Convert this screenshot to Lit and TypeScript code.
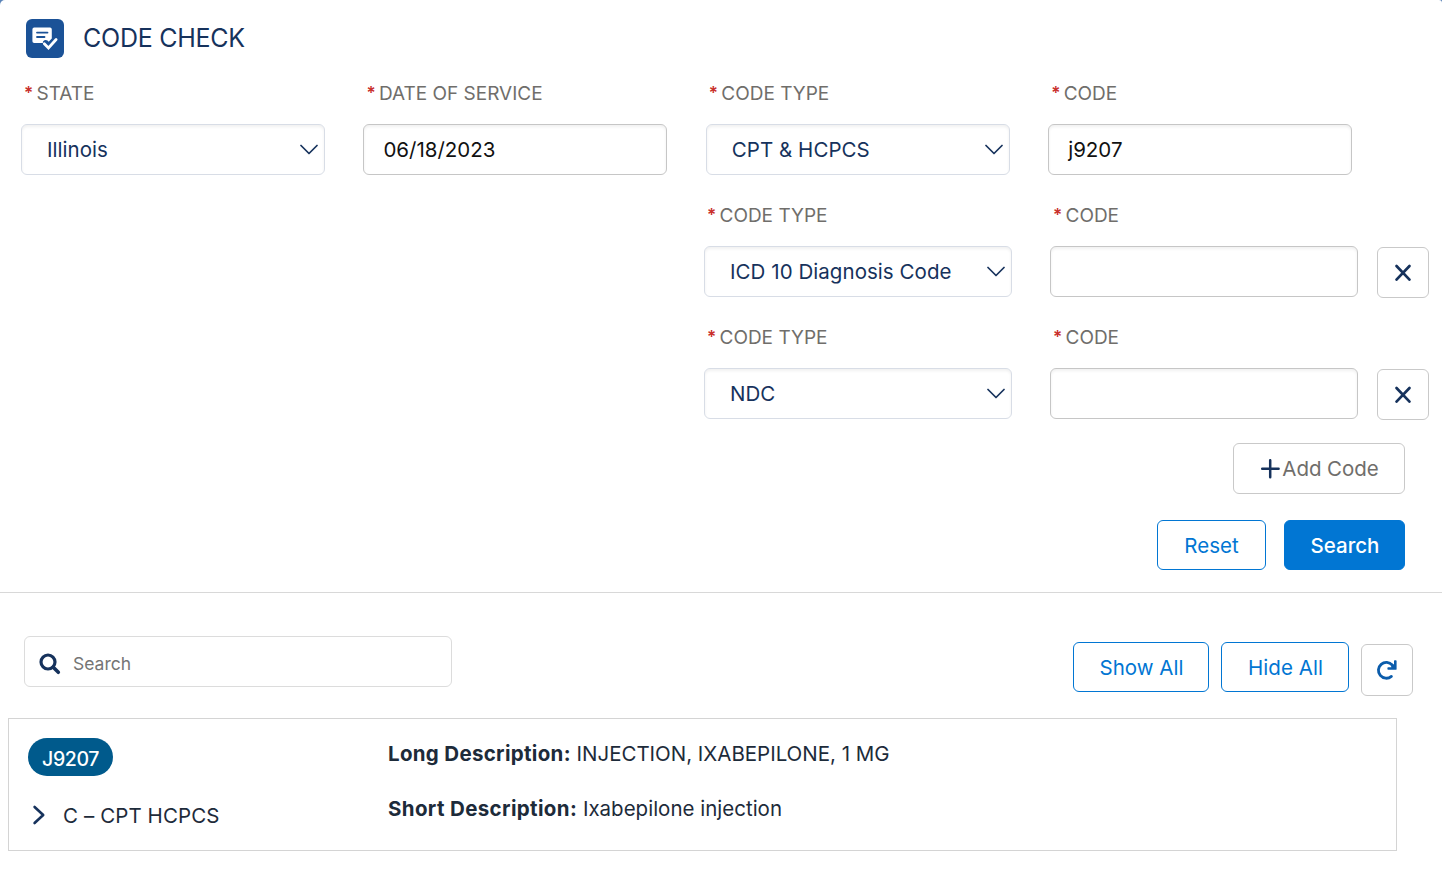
import { LitElement, html, css } from "lit";
import { customElement, state } from "lit/decorators.js";

interface CodeRow { type: string; code: string; }

@customElement("app-root")
export class AppRoot extends LitElement {
  static styles = css`
    :host {
      display: block;
      height: 878px;
      overflow: hidden;
      background: #5b84b8;
      font-family: Inter, "Liberation Sans", sans-serif;
      font-size: 20.5px;
      color: #1d2b3a;
    }
    * { box-sizing: border-box; }
    .page { height: 878px; background: #fff; border-radius: 5px 3px 0 0; display: flex; flex-direction: column; }
    header { display: flex; align-items: center; gap: 19px; height: 58px; padding: 19px 0 0 26px; }
    .logo { width: 38px; height: 39px; border-radius: 6px; background: #1b5297; display: block; }
    h1 { margin: 0; padding-bottom: 1px; font-size: 25px; font-weight: 400; color: #16325c; line-height: 38px; letter-spacing: -0.25px; }
    .form { height: 534px; flex: none; }
    .row { display: grid; height: 122px; align-items: start; }
    .first { grid-template-columns: repeat(4, 304px); column-gap: 38.4px; padding: 14px 0 0 21px; height: 124px; }
    .extra { grid-template-columns: 308px 308px 52px; column-gap: 38px; padding: 12px 0 0 704px; }
    .extra .remove { margin: 53px 0 0 -19px; }
    .label { display: flex; height: 40px; padding: 4px 0 0 3px; line-height: 36px; font-size: 19px; color: #706e6b; white-space: nowrap; }
    .req { color: #c9302c; width: 12.5px; font-size: 17px; font-weight: 600; line-height: 35px; }
    .control { height: 51px; margin-top: 12px; border: 1px solid #c6c6c6; border-radius: 6px; display: flex; align-items: center; justify-content: space-between; color: #111; padding-left: 19px; box-shadow: inset 0 2px 3px rgba(0, 0, 0, .06); white-space: nowrap; }
    .select { border-color: #d8dde6; color: #16325c; padding: 0 6px 0 25px; letter-spacing: 0.05px; }
    .chev { width: 18px; height: 12px; display: block; }
    button { font: inherit; display: flex; align-items: center; justify-content: center; background: #fff; border: 1px solid #0176d3; color: #0176d3; border-radius: 6px; padding: 0; height: 50px; white-space: nowrap; }
    .neutral { border-color: #c9c9c9; color: #706e6b; }
    .remove { width: 52px; height: 51px; }
    .actions { display: flex; justify-content: flex-end; padding-right: 37px; gap: 18px; }
    .adding { padding-top: 17px; padding-bottom: 26px; }
    .add { width: 172px; height: 51px; gap: 2px; padding-left: 1px; letter-spacing: -0.05px; }
    .reset { width: 109px; padding-top: 1px; }
    .primary { width: 121px; padding: 1px 0 0 1px; background: #0176d3; color: #fff; font-weight: 500; }
    .results { border-top: 1px solid #d8d8d8; flex: 1; padding-top: 43px; }
    .toolbar { display: flex; align-items: flex-start; padding: 0 29px 0 24px; height: 82px; }
    .search { width: 428px; height: 51px; border: 1px solid #dcdcdc; border-radius: 6px; display: flex; align-items: center; padding: 3px 0 0 14px; font-size: 17.5px; color: #757575; gap: 12px; }
    .search svg { margin-top: 1px; }
    .tools { margin-left: auto; display: flex; gap: 12px; padding-top: 6px; }
    .show { width: 136px; padding-left: 1px; }
    .hide { width: 128px; padding-left: 1px; letter-spacing: 0.05px; }
    .refresh { width: 52px; height: 52px; margin-top: 2px; }
    .card { margin: 0 45px 0 8px; height: 133px; border: 1px solid #d4d4d4; display: grid; grid-template-columns: 360px 1fr; padding: 19px 0 0 19px; }
    .pill { display: flex; width: 85px; height: 38px; border-radius: 19px; background: #005a8c; color: #fff; align-items: center; justify-content: center; padding-top: 3px; font-size: 19.5px; font-weight: 500; letter-spacing: -0.4px; }
    .group { display: flex; align-items: center; gap: 17px; margin-top: 27px; padding-left: 4px; letter-spacing: 0.1px; }
    .group svg { margin-top: -1px; }
    .desc { line-height: 32px; white-space: nowrap; }
    .desc:first-child { letter-spacing: -0.02px; }
    .desc + .desc { margin-top: 23px; }
    .desc b { font-weight: 700; letter-spacing: 0.36px; }
    .desc:first-child b { letter-spacing: 0.31px; }
    svg { flex: none; }
  `;

  @state() private rows: CodeRow[] = [
    { type: "ICD 10 Diagnosis Code", code: "" },
    { type: "NDC", code: "" },
  ];

  private label(text: string) {
    return html`<div class="label"><span class="req">*</span><span>${text}</span></div>`;
  }

  private select(label: string, value: string) {
    return html`<div>${this.label(label)}
      <div class="control select"><span>${value}</span>
        <svg class="chev" viewBox="0 0 18 12" fill="none" stroke="#16325c" stroke-width="1.7" stroke-linecap="round" stroke-linejoin="round"><path d="M1 1.500 9 9.500 17 1.500" /></svg>
      </div></div>`;
  }

  private input(label: string, value: string) {
    return html`<div>${this.label(label)}
      <div class="control"><span>${value}</span></div></div>`;
  }

  render() {
    return html`<div class="page">
      <header>
        <svg class="logo" viewBox="0 0 38 39">
          <path fill="#fff" d="M8.2 8.6H24a1.8 1.8 0 0 1 1.8 1.8v9.2l-3.1 3.2-1.2-1.2a2.9 2.9 0 0 0-4.7 2.4H8.2a1.8 1.8 0 0 1-1.8-1.8V10.400a1.8 1.8 0 0 1 1.8-1.8Z" />
          <path d="M11 13.600h10.500M11 18h7.500" stroke="#1b5297" stroke-width="1.8" stroke-linecap="round" />
          <path d="m18.300 24.700 4.200 4.200 7.600-8.400" fill="none" stroke="#fff" stroke-width="2.800" stroke-linecap="round" />
        </svg>
        <h1>CODE CHECK</h1>
      </header>
      <section class="form">
        <div class="row first">
          ${this.select("STATE", "Illinois")}
          ${this.input("DATE OF SERVICE", "06/18/2023")}
          ${this.select("CODE TYPE", "CPT & HCPCS")}
          ${this.input("CODE", "j9207")}
        </div>
        ${this.rows.map((r) => html`<div class="row extra">
          ${this.select("CODE TYPE", r.type)}
          ${this.input("CODE", r.code)}
          <button class="neutral remove" aria-label="Remove"><svg width="18" height="18" viewBox="0 0 18 18" stroke="#16325c" stroke-width="2.7" stroke-linecap="round"><path d="M2.500 2l13 13.600M15.500 2l-13 13.600" /></svg></button>
        </div>`)}
        <div class="actions adding">
          <button class="neutral add"><svg width="20" height="20" viewBox="0 0 20 20" stroke="#16325c" stroke-width="2.5" stroke-linecap="round"><path d="M10.200 1.200v17M2.200 9.700h16.400" /></svg>Add Code</button>
        </div>
        <div class="actions"><button class="reset">Reset</button><button class="primary">Search</button></div>
      </section>
      <section class="results">
        <div class="toolbar">
          <div class="search">
            <svg width="22" height="22" viewBox="0 0 22 22" fill="none" stroke="#16325c"><circle cx="9" cy="9" r="7" stroke-width="3.2" /><path d="m14.500 14.500 4.800 4.800" stroke-width="3.6" stroke-linecap="round" /></svg>
            <span>Search</span>
          </div>
          <div class="tools">
            <button class="show">Show All</button>
            <button class="hide">Hide All</button>
            <button class="neutral refresh" aria-label="Refresh">
              <svg width="22" height="22" viewBox="0 0 22 22"><path d="M15.400 17.400A7.900 7.900 0 1 1 16.300 6.200" fill="none" stroke="#0b5cab" stroke-width="2.800" stroke-linecap="round" /><path fill="#0b5cab" d="M18 1.800a.8.8 0 0 1 .8-.5h1a.8.8 0 0 1 .8.8v7.800a.9.9 0 0 1-.9.9h-7.500a.8.8 0 0 1-.8-.8V9a.8.8 0 0 1 .8-.8h3.200L14.800 6l1.500-1.500 1.700 1.300Z" /></svg>
            </button>
          </div>
        </div>
        <div class="card">
          <div>
            <div class="pill">J9207</div>
            <div class="group"><svg width="14" height="20" viewBox="0 0 14 20" fill="none" stroke="#16325c" stroke-width="2.6" stroke-linecap="round" stroke-linejoin="round"><path d="M2.600 2 11.200 10l-8.600 8" /></svg><span>C – CPT HCPCS</span></div>
          </div>
          <div>
            <div class="desc"><b>Long Description:</b> <span>INJECTION, IXABEPILONE, 1 MG</span></div>
            <div class="desc"><b>Short Description:</b> <span>Ixabepilone injection</span></div>
          </div>
        </div>
      </section>
    </div>`;
  }
}
